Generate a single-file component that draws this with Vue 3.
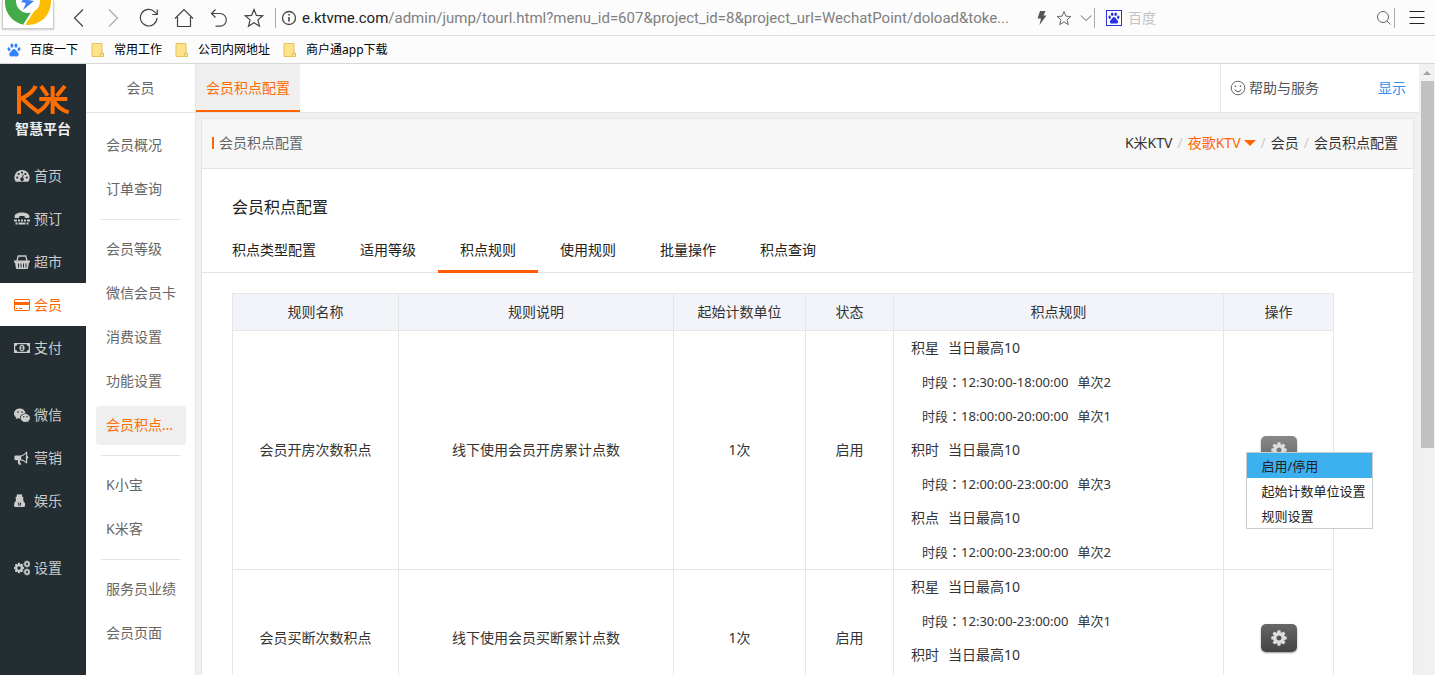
<script setup>
import { ref } from 'vue'

const bookmarks = ['常用工作', '公司内网地址', '商户通app下载']

const mainGroups = [
  [
    { name: '首页', icon: 'gauge' },
    { name: '预订', icon: 'phone' },
    { name: '超市', icon: 'basket' },
    { name: '会员', icon: 'card' },
    { name: '支付', icon: 'money' }
  ],
  [
    { name: '微信', icon: 'wechat' },
    { name: '营销', icon: 'horn' },
    { name: '娱乐', icon: 'agent' }
  ],
  [{ name: '设置', icon: 'cogs' }]
]

const subGroups = [
  ['会员概况', '订单查询'],
  ['会员等级', '微信会员卡', '消费设置', '功能设置', '会员积点配置'],
  ['K小宝', 'K米客'],
  ['服务员业绩', '会员页面']
]

const tabs = ['积点类型配置', '适用等级', '积点规则', '使用规则', '批量操作', '积点查询']
const activeTab = ref('积点规则')

const columns = ['规则名称', '规则说明', '起始计数单位', '状态', '积点规则', '操作']

const rows = [
  {
    name: '会员开房次数积点',
    note: '线下使用会员开房累计点数',
    unit: '1次',
    state: '启用',
    rules: [
      { kind: '积星', limit: '当日最高10' },
      { time: '12:30:00-18:00:00', each: '单次2' },
      { time: '18:00:00-20:00:00', each: '单次1' },
      { kind: '积时', limit: '当日最高10' },
      { time: '12:00:00-23:00:00', each: '单次3' },
      { kind: '积点', limit: '当日最高10' },
      { time: '12:00:00-23:00:00', each: '单次2' }
    ]
  },
  {
    name: '会员买断次数积点',
    note: '线下使用会员买断累计点数',
    unit: '1次',
    state: '启用',
    rules: [
      { kind: '积星', limit: '当日最高10' },
      { time: '12:30:00-23:00:00', each: '单次1' },
      { kind: '积时', limit: '当日最高10' },
      { time: '12:00:00-23:00:00', each: '单次1' }
    ]
  }
]

const openRow = ref(0)
const actions = ['启用/停用', '起始计数单位设置', '规则设置']
const toggle = (i) => { openRow.value = openRow.value === i ? -1 : i }
</script>

<template>
  <div class="window">
    <svg class="defs" width="0" height="0" aria-hidden="true">
      <symbol id="cog" viewBox="0 0 1792 1792"><path d="M1152 896q0-106-75-181t-181-75-181 75-75 181 75 181 181 75 181-75 75-181zm512-109v222q0 12-8 23t-20 13l-185 28q-19 54-39 91 35 50 107 138 10 12 10 25t-9 23q-27 37-99 108t-94 71q-12 0-26-9l-138-108q-44 23-91 38-16 136-29 186-7 28-36 28h-222q-14 0-24.5-8.5t-11.5-21.5l-28-184q-49-16-90-37l-141 107q-10 9-25 9-14 0-25-11-126-114-165-168-7-10-7-23 0-12 8-23 15-21 51-66.5t54-70.5q-27-50-41-99l-183-27q-13-2-21-12.5t-8-23.5v-222q0-12 8-23t19-13l186-28q14-46 39-92-40-57-107-138-10-12-10-24 0-10 9-23 26-36 98.5-107.5t94.5-71.5q13 0 26 10l138 107q44-23 91-38 16-136 29-186 7-28 36-28h222q14 0 24.5 8.5t11.5 21.5l28 184q49 16 90 37l142-107q9-9 24-9 13 0 25 10 129 119 165 170 7 8 7 22 0 12-8 23-15 21-51 66.5t-54 70.5q26 50 41 98l183 28q13 2 21 12.5t8 23.5z" /></symbol>
      <symbol id="paw" viewBox="0 0 16 16">
        <ellipse cx="5.6" cy="3" rx="1.7" ry="2.4" /><ellipse cx="10.2" cy="3" rx="1.7" ry="2.4" />
        <ellipse cx="2.2" cy="7" rx="1.6" ry="2.2" transform="rotate(-15 2.2 7)" /><ellipse cx="13.7" cy="7" rx="1.6" ry="2.2" transform="rotate(15 13.7 7)" />
        <path d="M8 6.800c1.600 0 2.200 1.600 3.400 2.800 1.400 1.300 2.300 2.300 2 3.900-.4 1.900-2.200 2.100-3.400 1.900-1.300-.2-2.700-.2-4 0-1.200.2-3 0-3.400-1.900-.3-1.600.6-2.600 2-3.900C5.800 8.400 6.400 6.800 8 6.800z" />
      </symbol>
      <symbol id="gauge" viewBox="0 0 16 16">
        <path fill-rule="evenodd" d="M8 2a7.500 7.500 0 0 0-6.600 11.200c.2.300.4.500.8.500h11.600c.4 0 .6-.2.800-.5A7.500 7.500 0 0 0 8 2zM3.200 8.500a1.100 1.100 0 1 1 0 2.200 1.100 1.100 0 0 1 0-2.200zm1.500-3.600a1.100 1.100 0 1 1 0 2.200 1.100 1.100 0 0 1 0-2.200zM8 3.400a1.100 1.100 0 1 1 0 2.200 1.100 1.100 0 0 1 0-2.200zm3.300 1.500a1.100 1.100 0 1 1 0 2.200 1.100 1.100 0 0 1 0-2.200zm1.500 3.600a1.100 1.100 0 1 1 0 2.200 1.100 1.100 0 0 1 0-2.200zM8.800 6.600l.9.200-.7 3.100a1.700 1.700 0 1 1-1-.3z" />
      </symbol>
      <symbol id="phone" viewBox="0 0 16 16">
        <path d="M8 1.500c3.600 0 7.500 1.200 7.500 4.200 0 .9-.3 1.300-.8 1.300h-2.900c-.8 0-1-.4-1-1.300V5.400C9.900 4.800 6.100 4.800 5.200 5.400v.3c0 .9-.2 1.300-1 1.300H1.300C.8 7 .5 6.600.5 5.700.5 2.700 4.400 1.500 8 1.500z" />
        <path d="M0 8.500h3v2H0zm4 0h2v2H4zm3 0h2v2H7zm3 0h2v2h-2zm3 0h3v2h-3zM1.500 11.500h2v2h-2zm3 0h7v2h-7zm8 0h2v2h-2z" />
      </symbol>
      <symbol id="basket" viewBox="0 0 16 16">
        <path d="M3 7l1.200-5h7.600L13 7" fill="none" stroke="currentColor" stroke-width="1.300" />
        <path fill-rule="evenodd" d="M0 6.500h16v2h-1l-.9 5.500q-.1.900-1 .9H2.900q-.9 0-1-.9L1 8.500H0zM4 9.500v4h1v-4zm2.500 0v4h1v-4zm2.500 0v4h1v-4zm2.500 0v4h1v-4z" />
      </symbol>
      <symbol id="card" viewBox="0 0 16 16">
        <path fill-rule="evenodd" d="M1.500 2h13Q16 2 16 3.500v9q0 1.500-1.500 1.500h-13Q0 14 0 12.500v-9Q0 2 1.500 2zm0 1q-.5 0-.5.500V5h14V3.500q0-.5-.5-.5zM1 8v4.500q0 .5.500.5h13q.5 0 .5-.5V8zm1 3h2v1H2zm3 0h3v1H5z" />
      </symbol>
      <symbol id="money" viewBox="0 0 16 16">
        <path fill-rule="evenodd" d="M0 3h16v10H0zm3.200 1.200a2 2 0 0 1-2 2v3.600a2 2 0 0 1 2 2h9.600a2 2 0 0 1 2-2V6.200a2 2 0 0 1-2-2zM8 4.800c1.600 0 2.600 1.400 2.600 3.200S9.600 11.200 8 11.200 5.400 9.800 5.400 8 6.400 4.800 8 4.800zM7.600 6l-1 .9.500.6.400-.3v2h-.8v.8h2.500v-.8h-.7V6z" />
      </symbol>
      <symbol id="wechat" viewBox="0 0 16 16">
        <path fill-rule="evenodd" d="M5.900 1.500C2.600 1.500 0 3.700 0 6.600c0 1.600.8 3 2.200 3.900l-.6 1.800 2.100-1.100c.8.200 1.500.3 2.200.3h.2C5.500 8.600 8 6.400 11.300 6.400h.4C11.200 3.500 8.700 1.500 5.900 1.500zM4 4.300a.8.800 0 1 1 0 1.600.8.800 0 0 1 0-1.600zm4 0a.8.800 0 1 1 0 1.600.8.800 0 0 1 0-1.600z" />
        <path fill-rule="evenodd" d="M16 10.900c0-2.200-2.200-4-4.700-4-2.700 0-4.700 1.800-4.700 4s2 4 4.700 4c.6 0 1.100-.1 1.700-.3l1.500.8-.4-1.400c1.100-.8 1.900-1.900 1.900-3.100zM9.800 9a.7.7 0 1 1 0 1.400.7.7 0 0 1 0-1.400zm3.100 0a.7.7 0 1 1 0 1.400.7.7 0 0 1 0-1.400z" />
      </symbol>
      <symbol id="horn" viewBox="0 0 16 16">
        <path fill-rule="evenodd" d="M13.200 2v4q1.100.2 1.100 1.400t-1.100 1.400v4q0 .6-.7.600-3-2.900-6-3.100-1 .5-.5 1.300-.4.700.6 1.300.2.700.9 1.100-.7 1.200-2.900.5-1.300-2.500-.5-4.300H1.700Q.4 10.200.4 9V6.800q0-1.300 1.300-1.300h4.200q3.300 0 6.600-4.100.7 0 .7.600zm-1.300 1.500Q9.600 6 7.200 6.400v2.900q2.400.4 4.700 2.500z" />
      </symbol>
      <symbol id="agent" viewBox="0 0 16 16">
        <path fill-rule="evenodd" d="M2.800 2.200Q3.300.8 4.200 1.200q.9.500 2.400 0 .9-.4 1.400 1l.4 1.800 1.600.7-1 .8.600 3q1.600.6 1.600 3.500 0 2-1.500 2H1.300Q0 14 0 12q0-2.900 1.600-3.500l.4-3-1-.8L2.400 4zM3.800 9l.8 4.200h.5l.2-2.600zm3.400 0l-1.500 1.600.2 2.600h.5z" />
      </symbol>
      <symbol id="cogs" viewBox="0 0 16 16">
        <use href="#cog" x="-1" y="2" width="12" height="12" />
        <use href="#cog" x="9" y="0" width="8" height="8" />
        <use href="#cog" x="9" y="8" width="8" height="8" />
      </symbol>
    </svg>

    <header class="toolbar">
      <div class="app-logo">
        <svg width="46" height="46" viewBox="0 0 46 46">
          <circle cx="23" cy="23" r="23" fill="#fcbc04" />
          <path d="M0 23A23 23 0 0 0 20 46L32 26L13 14L4 10A23 23 0 0 0 0 23z" fill="#43ab48" />
          <path d="M6 8A23 23 0 0 1 43 11L23 11L14 20z" fill="#e94435" />
          <path d="M32 26L19 46" stroke="#fff" stroke-width="2" />
          <circle cx="23" cy="22" r="12" fill="#fff" />
          <path d="M25 13L16 23l5 1-3 7 11-9-6-1 6-6z" fill="#3f7ff4" />
        </svg>
      </div>
      <div class="nav-buttons">
        <button aria-label="后退"><svg width="20" height="20" viewBox="0 0 20 20"><path d="M14 1.500L5.500 10l8.500 8.500" /></svg></button>
        <button aria-label="前进" class="dim"><svg width="20" height="20" viewBox="0 0 20 20"><path d="M5 1.500l8.500 8.500L5 18.500" /></svg></button>
        <button aria-label="刷新"><svg width="20" height="20" viewBox="0 0 20 20"><path d="M18 10a8.300 8.300 0 1 1-2.400-6.200L18 6.200M18.300 1.500v5h-5" /></svg></button>
        <button aria-label="主页"><svg width="20" height="20" viewBox="0 0 20 20"><path d="M1 10.500l9-9 9 9M3.500 9v9.500h13V9" /></svg></button>
        <button aria-label="恢复"><svg width="20" height="20" viewBox="0 0 20 20"><path d="M6.500 1.500l-4 4 4 4M3 5.500h8a6.300 6.300 0 0 1 0 12.700H6.500" /></svg></button>
        <button aria-label="收藏"><svg width="20" height="20" viewBox="0 0 20 20"><path d="M10 1.500l2.400 5.900 6.400.4-4.900 4.100 1.600 6.300-5.500-3.500-5.500 3.500 1.600-6.300-4.900-4.100 6.400-.4z" /></svg></button>
      </div>
      <div class="address">
        <svg class="line info" width="16" height="16" viewBox="0 0 16 16"><circle cx="8" cy="8" r="6.500" /><path d="M8 7v4.500M8 4v1.500" stroke-width="1.600" /></svg>
        <div class="url"><b>e.ktvme.com</b>/admin/jump/tourl.html?menu_id=607&amp;project_id=8&amp;project_url=WechatPoint/doload&amp;toke...</div>
        <svg width="12" height="16" viewBox="0 0 12 16"><path d="M4 1h5.500L7.500 5.500h3L3.500 15l1.500-6.500H1.500z" fill="#555" /></svg>
        <svg class="line" width="16" height="16" viewBox="0 0 16 16"><path d="M8 1.500l1.900 4.700 5 .3-3.900 3.200 1.300 4.900L8 11.900l-4.300 2.700L5 9.700 1.100 6.500l5-.3z" /></svg>
        <svg class="line" width="12" height="16" viewBox="0 0 12 16"><path d="M.7 5.500l5.300 5 5.300-5" /></svg>
      </div>
      <label class="search">
        <span class="engine"><svg width="12" height="12"><use href="#paw" /></svg></span>
        <input type="text" placeholder="百度" aria-label="搜索">
        <svg class="line" width="16" height="16" viewBox="0 0 16 16"><circle cx="7" cy="7" r="5.500" /><path d="M11 11l3.500 3.500" /></svg>
      </label>
      <button class="menu-button" aria-label="菜单"><svg width="16" height="16" viewBox="0 0 16 16"><path d="M.5 1.500h15M.5 7.500h15M.5 13.500h15" /></svg></button>
    </header>

    <nav class="bookmarks">
      <a href="#"><svg class="paw" width="14" height="14"><use href="#paw" /></svg>百度一下</a>
      <a v-for="b in bookmarks" :key="b" href="#">
        <svg width="14" height="14" viewBox="0 0 14 14"><path d="M1 .5h10v9.500h1.500v3.500H1z" fill="#fde28b" stroke="#e6c15a" /><path d="M9.500 13v-2.500h1.500" fill="none" stroke="#e6c15a" /></svg>{{ b }}
      </a>
    </nav>

    <div class="page">
      <aside class="side">
        <div class="brand">
          <svg width="54" height="30" viewBox="0 0 162 90">
            <g fill="none" stroke="#ff6c00" stroke-width="12">
              <path d="M9 3v84M59 3Q52 22 18 40Q38 60 66 81Q88 68 98 47" />
              <path d="M70 42h84M110 3v84M75 3l20 29M147 3l-25 30M113 46q12 25 45 36" />
            </g>
          </svg>
          <strong>智慧平台</strong>
        </div>
        <ul v-for="(g, i) in mainGroups" :key="i">
          <li v-for="m in g" :key="m.name">
            <a href="#" :class="{ active: m.name === '会员' }"><svg width="16" height="16"><use :href="'#' + m.icon" /></svg>{{ m.name }}</a>
          </li>
        </ul>
      </aside>

      <aside class="sub">
        <h2>会员</h2>
        <nav>
          <template v-for="(g, i) in subGroups" :key="i">
            <hr v-if="i">
            <a v-for="s in g" :key="s" href="#" :class="{ active: s === '会员积点配置' }">{{ s }}</a>
          </template>
        </nav>
      </aside>

      <main class="main">
        <div class="topbar">
          <a href="#" class="top-tab">会员积点配置</a>
          <div class="help">
            <a href="#"><svg class="line" width="16" height="16" viewBox="0 0 16 16"><circle cx="8" cy="8" r="6.800" /><path d="M4.800 9.300q.8 2.400 3.200 2.400t3.200-2.400" /><path d="M5.500 5.500v1.600M10.500 5.500v1.600" stroke-width="1.400" /></svg>帮助与服务</a>
            <a href="#" class="show">显示</a>
          </div>
        </div>

        <section class="card">
          <div class="card-head">
            <h1>会员积点配置</h1>
            <nav class="crumbs">
              <a href="#">K米KTV</a><i>/</i>
              <a href="#" class="store">夜歌KTV<svg width="12" height="6" viewBox="0 0 12 6"><path d="M0 0h12L6 6z" fill="#ff6400" /></svg></a><i>/</i>
              <a href="#">会员</a><i>/</i>
              <span>会员积点配置</span>
            </nav>
          </div>
          <h3>会员积点配置</h3>
          <div class="tabs" role="tablist">
            <button v-for="t in tabs" :key="t" role="tab" :aria-selected="t === activeTab" :class="{ active: t === activeTab }" @click="activeTab = t">{{ t }}</button>
          </div>
          <div class="table-wrap">
            <table>
              <colgroup><col class="c1"><col class="c2"><col class="c3"><col class="c4"><col class="c5"><col class="c6"></colgroup>
              <thead><tr><th v-for="c in columns" :key="c" scope="col">{{ c }}</th></tr></thead>
              <tbody>
                <tr v-for="(r, i) in rows" :key="r.name">
                  <td>{{ r.name }}</td>
                  <td>{{ r.note }}</td>
                  <td>{{ r.unit }}</td>
                  <td>{{ r.state }}</td>
                  <td class="rules">
                    <p v-for="(x, k) in r.rules" :key="k" :class="{ period: x.time }">
                      <template v-if="x.time"><span>时段<span class="colon">：</span>{{ x.time }}</span><span>{{ x.each }}</span></template>
                      <template v-else><span>{{ x.kind }}</span><span>{{ x.limit }}</span></template>
                    </p>
                  </td>
                  <td>
                    <div class="ops">
                      <button class="gear" :class="{ open: openRow === i }" aria-label="操作" @click="toggle(i)"><svg width="18" height="18"><use href="#cog" /></svg></button>
                      <ul v-if="openRow === i" class="menu">
                        <li v-for="(a, k) in actions" :key="a"><button :class="{ hover: k === 0 }">{{ a }}</button></li>
                      </ul>
                    </div>
                  </td>
                </tr>
              </tbody>
            </table>
          </div>
        </section>
      </main>

      <div class="scrollbar">
        <svg width="16" height="17" viewBox="0 0 16 17"><path d="M4 11h8L8 7z" fill="#a3a3a3" /></svg>
        <div class="thumb"></div>
      </div>
    </div>
  </div>
</template>

<style>
body { margin: 0; overflow: hidden; }
</style>

<style scoped>
.window {
  height: 100vh;
  display: flex;
  flex-direction: column;
  overflow: hidden;
  font: 14px/20px "Noto Sans", "Noto Sans CJK SC", sans-serif;
  font-weight: 400;
  color: #333;
  background: #f0f0f0;
}
.window *, .window { box-sizing: border-box; }
.defs { position: absolute; }
a { color: inherit; text-decoration: none; }
button { font: inherit; color: inherit; background: none; border: 0; padding: 0; cursor: pointer; }
ul { list-style: none; margin: 0; padding: 0; }
svg { fill: currentColor; flex: none; }
h1, h2, h3, p { margin: 0; font-weight: 400; }
.line { fill: none; stroke: #666; stroke-width: 1; }
.info { stroke: #444; stroke-width: 1.3; }

.toolbar {
  flex: none;
  height: 36px;
  display: flex;
  align-items: center;
  background: #fcfcfc;
  border-bottom: 1px solid #dcdcdc;
}
.app-logo {
  align-self: flex-start;
  width: 52px;
  height: 29px;
  margin-left: 2px;
  padding: 0 2px 3px;
  display: flex;
  align-items: flex-end;
  overflow: hidden;
  background: #fff;
  border: 1px solid #ccc;
  border-top: 0;
  box-shadow: 0 1px 2px #ccc;
}
.nav-buttons { display: flex; gap: 15px; margin-left: 15px; }
.nav-buttons button { height: 20px; width: 20px; }
.nav-buttons svg { display: block; fill: none; stroke: #444; stroke-width: 1.2; }
.nav-buttons .dim svg { stroke: #aaa; }
.address {
  flex: 1;
  min-width: 0;
  height: 20px;
  margin-left: 11px;
  padding: 0 2px 0 5px;
  display: flex;
  align-items: center;
  gap: 8px;
  border-left: 1px solid #aaa;
  border-right: 1px solid #aaa;
}
.url { flex: 1; overflow: hidden; white-space: nowrap; margin-left: -3px; font-family: Roboto, sans-serif; font-size: 15px; color: #808080; }
.url b { font-weight: 400; color: #222; }
.search { width: 300px; height: 20px; display: flex; align-items: center; padding: 0 2px 0 11px; border-right: 1px solid #aaa; }
.engine { width: 16px; height: 16px; display: flex; align-items: center; justify-content: center; border: 1px solid #2932e1; color: #2932e1; }
.search input { flex: 1; min-width: 0; border: 0; outline: 0; background: none; font: inherit; padding: 0 6px; }
.search input::placeholder { color: #c4c4c4; }
.menu-button { width: 16px; height: 16px; margin: 0 10px 0 14px; }
.menu-button svg { display: block; stroke: #222; stroke-width: 1; }

.bookmarks {
  flex: none;
  height: 28px;
  padding: 0 7px;
  display: flex;
  align-items: center;
  gap: 13px;
  font-size: 12px;
  color: #000;
  background: #fcfcfc;
  border-bottom: 1px solid #d8d8d8;
}
.bookmarks a { display: flex; align-items: center; gap: 9px; }
.bookmarks .paw { color: #3385ff; }

.page { flex: 1; min-height: 0; display: flex; }
.side { flex: none; width: 86px; background: #232d32; color: #ccc; }
.brand { height: 90px; padding-top: 21px; display: flex; flex-direction: column; align-items: center; gap: 4px; color: #eee; }
.brand strong { font-size: 14px; line-height: 20px; }
.side ul { margin-bottom: 24px; }
.side li a { height: 43px; padding-left: 14px; display: flex; align-items: center; gap: 4px; }
.side li a.active { background: #fff; color: #ff6400; }

.sub { flex: none; width: 110px; background: #fff; border-right: 1px solid #e5e5e5; color: #666; }
.sub h2 { height: 49px; font-size: 14px; line-height: 48px; text-align: center; border-bottom: 1px solid #e5e5e5; }
.sub nav { display: flex; flex-direction: column; gap: 5px; padding: 13px 9px 0 10px; }
.sub nav a { height: 39px; line-height: 37px; padding: 0 10px; border-radius: 3px; white-space: nowrap; overflow: hidden; text-overflow: ellipsis; }
.sub nav a.active { background: #efefef; color: #ff6c00; }
.sub hr { margin: 5px; border: 0; width: 80px; height: 1px; background: #e5e5e5; }

.main { flex: 1; min-width: 0; overflow: hidden; }
.topbar { height: 49px; display: flex; justify-content: space-between; background: #fff; border-bottom: 1px solid #e5e5e5; }
.top-tab { padding: 0 10px; line-height: 48px; color: #ff6c00; background: #efefef; border-bottom: 2px solid #ff6400; }
.help { width: 199px; padding: 0 13px 0 9px; display: flex; align-items: center; justify-content: space-between; border-left: 1px solid #e5e5e5; color: #555; }
.help a { display: flex; align-items: center; gap: 3px; }
.help .show { color: #2d8cf0; }

.card { margin: 5px 5px 0; background: #fff; border: 1px solid #e5e5e5; }
.card-head { height: 50px; padding: 0 15px 2px 10px; display: flex; align-items: center; justify-content: space-between; background: #f7f7f7; border-bottom: 1px solid #e5e5e5; }
.card-head h1 { font-size: 14px; color: #666; display: flex; align-items: center; gap: 5px; }
.card-head h1::before { content: ""; width: 2px; height: 12px; background: #ff6400; }
.crumbs { display: flex; align-items: center; }
.crumbs i { font-style: normal; color: #ccc; padding: 0 5px; }
.crumbs .store { display: flex; align-items: center; gap: 3px; color: #ff6400; }
.card h3 { padding: 26px 30px 0; font-size: 16px; line-height: 24px; color: #222; }
.tabs { margin-top: 8px; height: 46px; padding-left: 8px; display: flex; border-bottom: 1px solid #e5e5e5; color: #222; }
.tabs button { height: 46px; padding: 2px 22px 0; border-bottom: 3px solid transparent; }
.tabs button.active { border-color: #ff5a00; }
.table-wrap { padding: 20px 79px 30px 30px; }

table { width: 100%; table-layout: fixed; border-collapse: collapse; }
.c1 { width: 166px; } .c2 { width: 275px; } .c3 { width: 132px; }
.c4 { width: 88px; } .c5 { width: 330px; } .c6 { width: 110px; }
th, td { border: 1px solid #e5e6e8; padding: 0; text-align: center; vertical-align: middle; font-weight: 400; }
th { height: 37px; background: #f3f4f9; }
.rules { text-align: left; padding-left: 17px; }
.rules p { height: 34px; line-height: 34px; display: flex; gap: 9px; }
.rules .period { padding-left: 11px; font-size: 13px; }
.colon { font-family: "Noto Sans CJK TC", sans-serif; }

.ops { position: relative; width: 36px; margin: 0 auto; }
.gear {
  width: 36px;
  height: 28px;
  display: flex;
  align-items: center;
  justify-content: center;
  color: #ddd;
  background: linear-gradient(#666, #444);
  border-radius: 5px;
  box-shadow: 0 1px 2px #999;
}
.gear.open { background: linear-gradient(#888, #666); }
.menu { position: absolute; z-index: 1; top: 16px; left: -15px; background: #fff; border: 1px solid #ccc; font-size: 13px; color: #222; }
.menu button { display: block; width: 100%; height: 25px; padding: 0 6px 0 15px; text-align: left; white-space: nowrap; }
.menu .hover { background: #3db1f0; }

.scrollbar { flex: none; width: 16px; background: #f1f1f1; }
.scrollbar svg { display: block; }
.thumb { height: 60%; margin: 0 1px 0 2px; background: #c1c1c1; }
</style>
